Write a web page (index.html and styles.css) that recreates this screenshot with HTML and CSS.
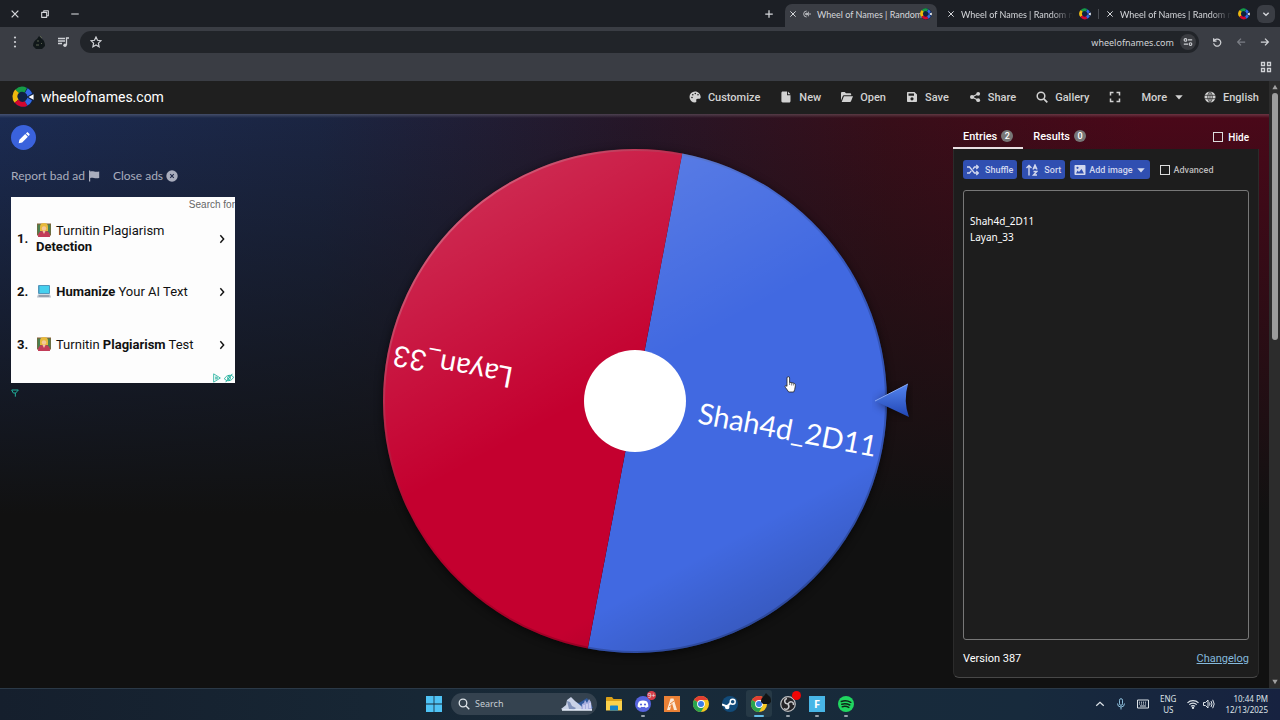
FILE: index.html
```
<!DOCTYPE html>
<html lang="en">

<head>
    <meta charset="UTF-8">
    <meta name="viewport" content="width=device-width, initial-scale=1.0">
    <title>Wheel of Names | Random name picker</title>
    <link rel="stylesheet" href="styles.css">
</head>

<body>
    <!-- shared icons -->
    <svg class="sprite" width="0" height="0" aria-hidden="true">
        <symbol id="logo" viewBox="0 0 24 24">
            <circle cx="12" cy="12" r="11.5" fill="#0f2242" />
            <g fill="none" stroke-width="5.500">
                <path d="M5.500 5.800A8.200 8.200 0 0 1 15 4.600" stroke="#169b45" />
                <path d="M5 16.500A8.200 8.200 0 0 1 5.500 5.800" stroke="#efb90c" />
                <path d="M15.500 19A8.200 8.200 0 0 1 5 16.500" stroke="#d2062f" />
                <path d="M15.700 4.900A8.200 8.200 0 0 1 15.500 19" stroke="#3469e6" />
            </g>
            <path d="M15.500 12L24 7v10z" fill="#0f2242" />
            <path d="M18 12l5.500-3v6z" fill="#fff" />
        </symbol>
        <symbol id="close" viewBox="0 0 12 12">
            <path d="M2 2l8 8M10 2l-8 8" fill="none" stroke="currentColor" stroke-width="1.500" />
        </symbol>
        <symbol id="caret" viewBox="0 0 12 12">
            <path d="M1.500 4h9L6 9z" fill="currentColor" />
        </symbol>
        <symbol id="chevron" viewBox="0 0 12 12">
            <path d="M4 1.500L8 6l-4 4.500" fill="none" stroke="currentColor" stroke-width="1.700" />
        </symbol>
        <symbol id="teacher" viewBox="0 0 14 14">
            <rect x="0" y="1" width="14" height="11" fill="#4c8050" stroke="#8a5f35" />
            <path d="M3 8V4a4 4 0 0 1 8 0v4z" fill="#e7b93c" />
            <circle cx="7" cy="5.500" r="2.200" fill="#f4c79a" />
            <path d="M1 14c0-5 2-6 6-6s6 1 6 6z" fill="#c23c58" />
            <path d="M5.500 8h3L7 11z" fill="#f2c6a8" />
        </symbol>
        <symbol id="chrome" viewBox="0 0 16 16">
            <circle cx="8" cy="8" r="8" fill="#f7c821" />
            <path d="M8 8L1.070 4A8 8 0 0 1 14.930 4H8z" fill="#e23e32" />
            <path d="M1.070 4A8 8 0 0 0 8 16l3.500-6L8 8z" fill="#2aa34f" />
            <circle cx="8" cy="8" r="3.900" fill="#fff" />
            <circle cx="8" cy="8" r="3" fill="#3c7de8" />
        </symbol>
    </svg>

    <div class="window">
        <!-- tab strip -->
        <div class="tab-strip">
            <div class="window-controls">
                <button aria-label="Close window"><svg class="i10"><use href="#close" /></svg></button>
                <button aria-label="Restore"><svg class="i10" viewBox="0 0 12 12"><path d="M2 4h6v6H2zM4.500 4V2H10v6H8" fill="none" stroke="currentColor" stroke-linejoin="round" stroke-width="1.300" /></svg></button>
                <button aria-label="Minimize"><svg class="i10" viewBox="0 0 12 12"><path d="M1.500 6h9" stroke="currentColor" stroke-width="1.300" /></svg></button>
            </div>
            <div class="tabs">
                <button class="new-tab" aria-label="New tab"><svg class="i10" viewBox="0 0 12 12"><path d="M6 1.500v9M1.500 6h9" stroke="currentColor" stroke-width="1.500" /></svg></button>
                <div class="tab active">
                    <svg class="i8"><use href="#close" /></svg>
                    <svg class="i8" viewBox="0 0 12 12"><circle cx="6" cy="6" r="1.500" fill="currentColor" /><path d="M5.500 1.500a4.500 4.500 0 0 0 0 9M5 4a2.300 2.300 0 0 0 0 4M8 2.500v7M10.500 4.500v3" fill="none" stroke="currentColor" stroke-width="1.200" /></svg>
                    <span class="tab-title">Wheel of Names | Random</span>
                    <svg class="i12"><use href="#logo" /></svg>
                </div>
                <div class="tab">
                    <svg class="i8"><use href="#close" /></svg>
                    <span class="tab-title">Wheel of Names | Random nam</span>
                    <svg class="i12"><use href="#logo" /></svg>
                </div>
                <div class="tab divided">
                    <svg class="i8"><use href="#close" /></svg>
                    <span class="tab-title">Wheel of Names | Random nam</span>
                    <svg class="i12"><use href="#logo" /></svg>
                </div>
                <button class="tab-search" aria-label="Search tabs"><svg class="i8" viewBox="0 0 12 12"><path d="M2 4l4 4 4-4" fill="none" stroke="currentColor" stroke-width="2" /></svg></button>
            </div>
        </div>

        <!-- address bar -->
        <div class="toolbar">
            <div class="tools">
                <button aria-label="Menu"><svg class="i12" viewBox="0 0 12 12" fill="currentColor"><circle cx="6" cy="1.500" r="1.100" /><circle cx="6" cy="6" r="1.100" /><circle cx="6" cy="10.500" r="1.100" /></svg></button>
                <button aria-label="Profile"><svg class="i14" viewBox="0 0 14 14"><path d="M1 11c0-4 2-6 4-7l2-3 3 3c2 1 3 4 3 7l-3 3H4z" fill="#11181a" /><path d="M8 1l2 2M5 6h2M9 8l1 1M4 10h3" stroke="#59614f" /></svg></button>
                <button aria-label="Media"><svg class="i12" viewBox="0 0 12 12"><path d="M1 2.500h7M1 5h7M1 7.500h4M9.500 9V2H12" fill="none" stroke="currentColor" stroke-width="1.300" /><circle cx="8" cy="9.300" r="1.700" fill="currentColor" /></svg></button>
            </div>
            <div class="address">
                <svg class="i12" viewBox="0 0 12 12"><path d="M6 1l1.500 3.300 3.500.4-2.600 2.400.7 3.600L6 8.900l-3.100 1.800.7-3.600L1 4.700l3.500-.4z" fill="none" stroke="currentColor" stroke-width="1.200" /></svg>
                <input class="url" type="text" aria-label="Address" value="wheelofnames.com">
                <span class="site-info"><svg class="i10" viewBox="0 0 12 12"><path d="M6 3.500h5M1 8.500h5" stroke="currentColor" stroke-width="1.500" /><g fill="none" stroke="currentColor" stroke-width="1.300"><circle cx="3" cy="3.500" r="1.600" /><circle cx="9" cy="8.500" r="1.600" /></g></svg></span>
            </div>
            <div class="tools wide">
                <button aria-label="Reload"><svg class="i10" viewBox="0 0 12 12"><path d="M2 1.500V5h3.500M2.300 5A4.300 4.300 0 1 1 2 7.500" fill="none" stroke="currentColor" stroke-width="1.500" /></svg></button>
                <button class="dim" aria-label="Forward"><svg class="i10" viewBox="0 0 12 12"><path d="M11 6H2M6 2L2 6l4 4" fill="none" stroke="currentColor" stroke-width="1.500" /></svg></button>
                <button aria-label="Back"><svg class="i10" viewBox="0 0 12 12"><path d="M1 6h9M6 2l4 4-4 4" fill="none" stroke="currentColor" stroke-width="1.500" /></svg></button>
            </div>
        </div>
        <div class="bookmarks">
            <button aria-label="Apps"><svg class="i12" viewBox="0 0 12 12"><path d="M1.500 1.500h3v3h-3zM7.500 1.500h3v3h-3zM1.500 7.500h3v3h-3zM7.500 7.500h3v3h-3z" fill="none" stroke="currentColor" stroke-width="1.300" /></svg></button>
        </div>

        <div class="viewport">
            <div class="page">
                <header class="site-header">
                    <a class="brand" href="#"><svg class="i22"><use href="#logo" /></svg>wheelofnames.com</a>
                    <nav class="menu">
                        <button><svg class="i12" viewBox="0 0 12 12"><path fill="currentColor" fill-rule="evenodd" d="M6 .5a5.500 5.500 0 0 0 0 11c1 0 1.600-.8 1.300-1.700-.4-1.200.3-2 1.400-2h1.500c.8 0 1.500-.6 1.500-1.500C11.600 3 9.200.5 6 .5zM3 7.300a.8.8 0 1 1 0-1.600.8.8 0 0 1 0 1.600zM3.800 4.500a.8.8 0 1 1 0-1.600.8.8 0 0 1 0 1.600zM6.300 3.300a.8.8 0 1 1 0-1.600.8.8 0 0 1 0 1.600zM9 4.500a.8.8 0 1 1 0-1.600.8.8 0 0 1 0 1.600z" /></svg>Customize</button>
                        <button><svg class="i12" viewBox="0 0 12 12"><path fill="currentColor" d="M2.700.5H7v3.700h3.500V10c0 .8-.5 1.500-1.300 1.500H2.700c-.8 0-1.300-.6-1.300-1.400V2C1.400 1.100 1.900.5 2.700.5zM7.900.5l2.600 2.800H7.900z" /></svg>New</button>
                        <button><svg class="i12" viewBox="0 0 12 12"><path fill="currentColor" d="M0 9.500V2.200C0 1.500.5 1 1.200 1h2.500L5 2.300h4c.7 0 1.200.5 1.200 1.200v.8H3C2.300 4.300 2 4.700 1.700 5.200zM2.900 5.200H12l-2 5c-.2.500-.5.800-1 .8H.7z" /></svg>Open</button>
                        <button><svg class="i12" viewBox="0 0 12 12"><path fill="currentColor" fill-rule="evenodd" d="M2 1h6.500L11 3.500V10c0 .6-.4 1-1 1H2c-.6 0-1-.4-1-1V2c0-.6.4-1 1-1zM2.500 2.500v2.200h5.500V2.500zM6 6.200a1.600 1.600 0 1 0 0 3.200 1.600 1.600 0 0 0 0-3.200z" /></svg>Save</button>
                        <button><svg class="i12" viewBox="0 0 12 12" fill="currentColor"><circle cx="9.200" cy="2.800" r="1.900" /><circle cx="9.200" cy="9.200" r="1.900" /><circle cx="3" cy="6" r="2" /><path d="M9.200 2.800L3 6l6.200 3.200" fill="none" stroke="currentColor" stroke-width="1.200" /></svg>Share</button>
                        <button><svg class="i12" viewBox="0 0 12 12"><circle cx="5" cy="5" r="3.800" fill="none" stroke="currentColor" stroke-width="1.500" /><path d="M7.800 7.800l3.500 3.500" stroke="currentColor" stroke-width="1.700" /></svg>Gallery</button>
                        <button aria-label="Fullscreen"><svg class="i12" viewBox="0 0 12 12"><path d="M1.500 4.500v-3h3M7.500 1.500h3v3M10.500 7.500v3h-3M4.500 10.500h-3v-3" fill="none" stroke="currentColor" stroke-width="1.500" /></svg></button>
                        <button>More<svg class="i10"><use href="#caret" /></svg></button>
                        <button><svg class="i12" viewBox="0 0 12 12"><circle cx="6" cy="6" r="5.500" fill="currentColor" /><path d="M.5 4.300h11M.5 7.700h11M6 .5v11M6 .5C3 3 3 9 6 11.500M6 .5C9 3 9 9 6 11.500" fill="none" stroke="#1f1f1f" stroke-width=".7" /></svg>English</button>
                    </nav>
                </header>

                <main class="content">
                    <aside class="side">
                        <button class="edit" aria-label="Edit title"><svg class="i12" viewBox="0 0 12 12" fill="currentColor"><path d="M.7 11.300l.7-3.500 5.800-5.700 2.700 2.700-5.700 5.800zM7.900 1.400l.8-.7c.5-.5 1-.5 1.500 0l1.100 1.100c.5.5.5 1 0 1.500l-.7.800z" /></svg></button>
                        <div class="ad-links">
                            <a href="#">Report bad ad <svg class="i12" viewBox="0 0 12 12" fill="currentColor"><path d="M1 .5h1.200v11H1zM2.200 1.500c3-1 4 .8 9 0V8c-5 1-6-1-9 0z" /></svg></a>
                            <a href="#">Close ads <svg class="i12" viewBox="0 0 12 12"><circle cx="6" cy="6" r="5.700" fill="currentColor" /><path d="M4.200 4.200l3.600 3.600M7.800 4.200L4.200 7.800" stroke="#202a49" stroke-width="1.100" /></svg></a>
                        </div>
                        <section class="ad">
                            <div class="ad-head">Search for</div>
                            <ol>
                                <li><b>1.</b><a href="#"><svg class="i14"><use href="#teacher" /></svg> Turnitin Plagiarism <b>Detection</b></a><svg class="i10"><use href="#chevron" /></svg></li>
                                <li><b>2.</b><a href="#"><svg class="i14" viewBox="0 0 14 14"><rect x="1" y="1" width="12" height="9" rx="1" fill="#5296bb" /><path d="M2.500 2h9.500v7H2.500z" fill="#45d0ee" /><path d="M1 10.500h12l1 3H0z" fill="#b0bac6" /><path d="M2 12h10" stroke="#7c8695" /></svg> <b>Humanize</b> Your AI Text</a><svg class="i10"><use href="#chevron" /></svg></li>
                                <li><b>3.</b><a href="#"><svg class="i14"><use href="#teacher" /></svg> Turnitin <b>Plagiarism</b> Test</a><svg class="i10"><use href="#chevron" /></svg></li>
                            </ol>
                            <div class="ad-choices">
                                <svg class="i10" viewBox="0 0 12 12"><path d="M2 1v10l8-5z M4.500 4.500v3L7 6z" fill="none" stroke="currentColor" /></svg>
                                <svg class="i10" viewBox="0 0 12 12"><path d="M.5 7C3 2 9 1.500 11.500 5 9 10 3 10.500.5 7zM2 11l8-10" fill="none" stroke="currentColor" stroke-width="1.200" /><circle cx="6" cy="6" r="1.800" fill="none" stroke="currentColor" /></svg>
                            </div>
                        </section>
                        <svg class="i8 ad-mark" viewBox="0 0 12 12"><path d="M1 1.500h10L7 6H3.500zM6.500 6v5.500" fill="none" stroke="currentColor" stroke-width="1.500" /></svg>
                    </aside>

                    <section class="stage">
                        <svg class="wheel" viewBox="0 -1 560 540" role="img" aria-label="Wheel">
                            <defs>
                                <linearGradient id="shine" x1=".3" y1="0" x2=".82" y2=".95">
                                    <stop offset="0" stop-color="#fff" stop-opacity=".17" />
                                    <stop offset=".45" stop-color="#fff" stop-opacity="0" />
                                    <stop offset=".8" stop-color="#000" stop-opacity="0" />
                                    <stop offset="1" stop-color="#000" stop-opacity=".18" />
                                </linearGradient>
                                <linearGradient id="rim" x1=".1" y1=".1" x2=".7" y2=".7">
                                    <stop offset="0" stop-color="#fff" stop-opacity=".3" />
                                    <stop offset=".6" stop-color="#000" stop-opacity=".1" />
                                    <stop offset="1" stop-color="#000" stop-opacity=".2" />
                                </linearGradient>
                                <linearGradient id="pin" x1="0" y1="0" x2="0" y2="1">
                                    <stop offset="0" stop-color="#5485f0" />
                                    <stop offset="1" stop-color="#2146b4" />
                                </linearGradient>
                                <filter id="glow" x="-10%" y="-10%" width="120%" height="120%">
                                    <feGaussianBlur stdDeviation="5" />
                                </filter>
                            </defs>
                            <circle cx="280" cy="272" r="252" fill="#000" opacity=".6" filter="url(#glow)" />
                            <g transform="rotate(10.800 280 270)">
                                <path d="M280 18a252 252 0 0 1 0 504z" fill="#4169e1" />
                                <path d="M280 18a252 252 0 0 0 0 504z" fill="#c4002f" />
                            </g>
                            <circle cx="280" cy="270" r="252" fill="url(#shine)" />
                            <circle cx="280" cy="270" r="251" fill="none" stroke="url(#rim)" stroke-width="2" />
                            <text class="slice" transform="rotate(10.800 280 270)" x="526" y="280" text-anchor="end">Shah4d_2D11</text>
                            <text class="slice" transform="rotate(190.800 280 270)" x="526" y="280" text-anchor="end">Layan_33</text>
                            <circle cx="280" cy="270" r="51" fill="#fff" />
                            <path d="M521 271l33-17q-5 17 0 33z" fill="#000" opacity=".5" filter="url(#glow)" />
                            <path d="M520 270l33-17q-5 17 1 33z" fill="url(#pin)" />
                            <path d="M520 270l33-17" stroke="#8aabf7" />
                            <!-- hand pointer -->
                            <g transform="translate(1 3)">
                                <path d="M431 249.500v-5.500a1.300 1.300 0 0 1 2.600 0v4.200l4.200 1c1.300.3 1.800 1.200 1.600 2.400l-.7 4-1 2.400h-5l-3.200-4.500c-1.200-2 .2-2.500 1.500-1.200z" fill="#fff" stroke="#222" stroke-width=".8" />
                                <path d="M433.600 248v3M435.700 249v2.500M437.700 249.500v2" stroke="#222" stroke-width=".6" />
                            </g>
                        </svg>
                    </section>

                    <aside class="panel">
                        <div class="panel-tabs">
                            <button class="selected">Entries <span class="count">2</span></button>
                            <button>Results <span class="count">0</span></button>
                            <label class="hide"><input type="checkbox"> Hide</label>
                        </div>
                        <div class="card">
                            <div class="actions">
                                <button><svg class="i12" viewBox="0 0 12 12"><path d="M0 3h2.500l5 6H11M0 9h2.500l1.800-2.200M6 5l1.500-2H11M9.300 1L11.300 3l-2 2M9.300 7l2 2-2 2" fill="none" stroke="currentColor" stroke-width="1.300" /></svg>Shuffle</button>
                                <button><svg class="i12" viewBox="0 0 12 12"><path d="M3 11.500V1.500M.5 4L3 1.500 5.500 4M7.500 7.500h3.300L7.500 11h3.500M7 5.500L9 1l2 4.500M7.700 4h2.600" fill="none" stroke="currentColor" stroke-width="1.400" /></svg>Sort</button>
                                <button class="tight"><svg class="i12" viewBox="0 0 12 12"><path d="M1.500 1h9c.6 0 1 .4 1 1v8c0 .6-.4 1-1 1h-9c-.6 0-1-.4-1-1V2c0-.6.4-1 1-1zM2 9.500h8L7.500 5 5 8 3.500 6.500zM3.500 2.700a1.100 1.100 0 1 0 0 2.200 1.100 1.100 0 0 0 0-2.200z" fill="currentColor" fill-rule="evenodd" /></svg>Add image<svg class="i10"><use href="#caret" /></svg></button>
                                <label><input type="checkbox"> Advanced</label>
                            </div>
                            <textarea class="entries" aria-label="Entries" spellcheck="false">

Shah4d_2D11
Layan_33</textarea>
                            <div class="card-foot">
                                <span>Version 387</span>
                                <a href="#">Changelog</a>
                            </div>
                        </div>
                    </aside>
                </main>
            </div>
            <div class="scrollbar">
                <svg class="i8" viewBox="0 0 12 12"><path d="M2 9.500l4-7 4 7z" fill="currentColor" /></svg>
                <div class="thumb"></div>
                <svg class="i8" viewBox="0 0 12 12"><path d="M2 2.500l4 7 4-7z" fill="currentColor" /></svg>
            </div>
        </div>
    </div>

    <footer class="taskbar">
        <div class="apps">
            <button aria-label="Start"><svg class="i16" viewBox="0 0 16 16"><path d="M0 0h7.600v7.600H0zM8.400 0H16v7.600H8.400zM0 8.400h7.600V16H0zM8.400 8.400H16V16H8.400z" fill="#4fc3f5" /></svg></button>
            <label class="search">
                <svg class="i12" viewBox="0 0 12 12"><circle cx="5" cy="5" r="3.800" fill="none" stroke="currentColor" stroke-width="1.300" /><path d="M7.800 7.800l3.500 3.500" stroke="currentColor" stroke-width="1.300" /></svg>
                <input type="text" placeholder="Search" aria-label="Search">
                <svg class="scene" viewBox="0 0 32 16"><path d="M8 5l10 2 8-5 6 10-8 2z" fill="#315a9c" /><path d="M0 13l5-4 1-5 4-3 4 4 5 4 5 5H2z" fill="#c9d2e6" /><path d="M6 5l3 1 2 4 4 2-2 2-5-1z" fill="#7f91b8" /><path d="M20 14l1-6 2-1 1-3 2 3 2-4 2 3 1 8z" fill="#a9b0df" /><path d="M23 9v4M26 8v5M29 7v5" stroke="#eef" /><path d="M1 14h30" stroke="#e6eef8" stroke-width="1.500" /></svg>
            </label>
            <button aria-label="File Explorer"><svg class="i16" viewBox="0 0 16 16"><path d="M0 2c0-.6.4-1 1-1h5l1.500 2H15c.6 0 1 .4 1 1v10H0z" fill="#dba119" /><path d="M0 5h16v9.500H0z" fill="#fbd14b" /><path d="M4 10.500c0-.6.400-1 1-1h6c.6 0 1 .4 1 1v4H4z" fill="#1684c9" /></svg></button>
            <button class="running" aria-label="Discord"><svg class="i16" viewBox="0 0 16 16"><circle cx="8" cy="8" r="8" fill="#5663dd" /><path d="M4 5.500c2.500-1.400 5.500-1.400 8 0 1 1.700 1.500 3.500 1.300 5.200l-2.600 1.300-.7-1.200c-1.300.3-2.700.3-4 0L5.300 12l-2.600-1.300C2.500 9 3 7.200 4 5.500z" fill="#fff" /><circle cx="6" cy="8.500" r="1.100" fill="#5663dd" /><circle cx="10" cy="8.500" r="1.100" fill="#5663dd" /></svg><span class="badge">9+</span></button>
            <button aria-label="FiveM"><svg class="i16" viewBox="0 0 16 16"><path d="M0 0h16v16H0z" fill="#ea8136" /><path d="M3 14L6.500 2.500h3L13 14h-3L8 7l-2 7z" fill="#fbe9d6" /><path d="M6 8l4-3M5 11l3-2" stroke="#ea8136" /></svg></button>
            <button aria-label="Chrome"><svg class="i16"><use href="#chrome" /></svg></button>
            <button aria-label="Steam"><svg class="i16" viewBox="0 0 16 16"><circle cx="8" cy="8" r="8" fill="#124b7a" /><path d="M0 8.500l5 2 5-5" fill="none" stroke="#fff" stroke-width="2" /><circle cx="5.200" cy="11" r="2.300" fill="#fff" /><circle cx="10.700" cy="5.700" r="2.500" fill="#124b7a" stroke="#fff" stroke-width="1.400" /></svg></button>
            <button class="running current" aria-label="Chrome window"><svg class="i16"><use href="#chrome" /></svg><svg class="avatar" viewBox="0 0 12 12"><path d="M1 10c0-4 2-5 3-6l2-3 3 3c2 1 2 4 2 6l-2 2H3z" fill="#101415" /></svg></button>
            <button class="running" aria-label="OBS"><svg class="i16" viewBox="0 0 16 16"><circle cx="8" cy="8" r="7.300" fill="#242326" stroke="#bdbec0" stroke-width="1.200" /><path d="M8 8C3.500 7.500 4 3 7 2.500M8 8c2-4 6-2 5.500 1M8 8c2.500 3.800-1 6.500-4 4.500" fill="none" stroke="#c8c9cb" stroke-width="1.500" /></svg><span class="badge record"></span></button>
            <button class="running" aria-label="Fortnite"><svg class="i16" viewBox="0 0 16 16"><path d="M0 0h16v16H0z" fill="#48b6e7" /><text class="tile-letter" x="8" y="12" text-anchor="middle">F</text></svg></button>
            <button class="running" aria-label="Spotify"><svg class="i16" viewBox="0 0 16 16"><circle cx="8" cy="8" r="8" fill="#20d660" /><path d="M3.300 5.500c3-1 6.500-.8 9.500.8M3.800 8.200c2.700-.8 5.500-.5 8 .8M4.300 10.700c2.200-.6 4.500-.4 6.500.7" fill="none" stroke="#0f2418" stroke-width="1.500" stroke-linecap="round" /></svg></button>
        </div>
        <div class="tray">
            <svg class="i10" viewBox="0 0 12 12"><path d="M1.500 8L6 4l4.500 4" fill="none" stroke="currentColor" stroke-width="1.500" /></svg>
            <svg class="i12" viewBox="0 0 12 12" fill="none" stroke="#8dbfdc"><rect x="4.500" y=".7" width="3" height="6.600" rx="1.500" /><path d="M2.500 5.500a3.500 3.500 0 0 0 7 0M6 9v2.500" /></svg>
            <svg class="i12" viewBox="0 0 12 12" fill="none" stroke="currentColor"><path d="M.5 2h11v8H.5z" /><path d="M2 4.200h8M2 6h8" stroke-dasharray="1 1" /><path d="M3 8h6" /></svg>
            <div class="lang">ENG<br>US</div>
            <div class="net">
                <svg class="i12" viewBox="0 0 12 12" fill="none" stroke="currentColor" stroke-width="1.200"><path d="M.5 4.800c3-3 8-3 11 0M2.300 6.700c2-2 5.400-2 7.400 0M4 8.400c1-1 3-1 4 0" /><circle cx="6" cy="9.800" r=".6" /></svg>
                <svg class="i12" viewBox="0 0 12 12" fill="none" stroke="currentColor"><path d="M.5 4.500h2L5 2v8L2.500 7.500h-2zM6.500 4.500q1 1.500 0 3M8 3q2 3 0 6M9.700 1.800q3 4.200 0 8.400" /></svg>
            </div>
            <div class="clock">10:44 PM<br>12/13/2025</div>
        </div>
    </footer>
</body>

</html>
```
FILE: styles.css
```
* {
    box-sizing: border-box;
}

body {
    margin: 0;
    height: 100vh;
    display: flex;
    flex-direction: column;
    background: #111;
    color: #fff;
    font-family: Roboto, sans-serif;
    font-size: 11px;
    overflow: hidden;
}

button,
input,
textarea {
    font: inherit;
    color: inherit;
    background: none;
    border: 0;
    padding: 0;
    margin: 0;
}

button {
    display: flex;
    align-items: center;
    justify-content: center;
}

a {
    color: inherit;
    text-decoration: none;
}

svg {
    flex: none;
}

.sprite {
    position: absolute;
}

/* icon sizes */
.i8 { width: 8px; height: 8px; }
.i10 { width: 10px; height: 10px; }
.i12 { width: 12px; height: 12px; }
.i14 { width: 14px; height: 14px; }
.i16 { width: 16px; height: 16px; }
.i22 { width: 22px; height: 22px; }

.window {
    flex: 1;
    min-height: 0;
    display: flex;
    flex-direction: column;
    background: #3a3d44;
}

/* tab strip */
.tab-strip {
    height: 27px;
    display: flex;
    justify-content: space-between;
    background: #1c1f25;
    color: #d5d7db;
    font-family: Lato, sans-serif;
    font-size: 9px;
}

.window-controls {
    display: flex;
    gap: 20px;
    padding-left: 10px;
}

.tabs {
    display: flex;
    align-items: flex-end;
    padding-right: 5px;
}

.new-tab {
    height: 27px;
    margin-right: 11px;
}

.tab {
    width: 159px;
    height: 23px;
    display: flex;
    align-items: center;
    gap: 6px;
    padding: 0 7px 3px 8px;
}

.tab.active {
    width: 152px;
    padding: 0 5px 3px 4px;
    background: #3a3d44;
    border-radius: 7px 7px 0 0;
    margin-right: 2px;
}

.tab.divided {
    position: relative;
}

.tab.divided::before {
    content: "";
    position: absolute;
    left: 0;
    top: 5px;
    width: 1px;
    height: 10px;
    background: #4a4d54;
}

.tab-title {
    flex: 1;
    min-width: 0;
    white-space: nowrap;
    -webkit-mask-image: linear-gradient(to right, #000 80%, transparent);
    mask-image: linear-gradient(to right, #000 80%, transparent);
}

.active .tab-title {
    -webkit-mask-image: none;
    mask-image: none;
}

.tab-search {
    align-self: center;
    width: 18px;
    height: 18px;
    border-radius: 6px;
    background: #3a3d44;
}

/* address bar */
.toolbar {
    height: 30px;
    display: flex;
    align-items: center;
    gap: 11px;
    padding: 0 10px 0 9px;
    color: #d0d2d6;
}

.tools {
    display: flex;
    gap: 11px;
}

.tools.wide {
    gap: 14px;
    padding-left: 2px;
}

.dim {
    color: #7b7e85;
}

.address {
    flex: 1;
    height: 22px;
    display: flex;
    align-items: center;
    gap: 6px;
    padding: 0 3px 0 10px;
    border-radius: 11px;
    background: #212429;
    font-family: "Noto Sans", sans-serif;
    font-size: 9px;
}

.url {
    flex: 1;
    min-width: 0;
    text-align: right;
}

.site-info {
    width: 16px;
    height: 16px;
    display: flex;
    align-items: center;
    justify-content: center;
    border-radius: 50%;
    background: #3a3c41;
}

.bookmarks {
    height: 24px;
    display: flex;
    justify-content: flex-end;
    padding: 0 8px 4px 0;
    color: #d0d2d6;
}

/* page */
.viewport {
    flex: 1;
    min-height: 0;
    display: flex;
}

.page {
    flex: 1;
    min-width: 0;
    display: flex;
    flex-direction: column;
    background: #111;
}

.site-header {
    height: 33px;
    display: flex;
    align-items: center;
    justify-content: space-between;
    padding: 0 10px 1px 12px;
    background: #1f1f1f;
}

.brand {
    display: flex;
    align-items: center;
    gap: 7px;
    font-size: 14px;
}

.menu {
    display: flex;
    gap: 20px;
    color: #d2d2d2;
    font-weight: 500;
}

.menu button {
    gap: 7px;
}

.content {
    flex: 1;
    min-height: 0;
    display: grid;
    grid-template-columns: 306px minmax(0, 1fr) 306px;
    padding: 8px 10px 10px;
    background:
        linear-gradient(to bottom, rgba(255, 255, 255, 0.18), transparent 4px),
        linear-gradient(to bottom, rgba(17, 17, 17, 0), #111 400px),
        linear-gradient(to right, #1b2b52, #1b2542 25%, #261628 50%, #380e19 70%, #4a0819 90%);
}

.side {
    padding-left: 1px;
}

.edit {
    width: 25px;
    height: 25px;
    margin: 3px 0 19px;
    border-radius: 50%;
    background: #3a62dc;
}

.ad-links {
    display: flex;
    gap: 13px;
    height: 13px;
    align-items: center;
    margin-bottom: 15px;
    color: #a9adbd;
    font-family: Lato, sans-serif;
    font-size: 12px;
}

.ad-links a {
    display: flex;
    align-items: center;
    gap: 3px;
}

.ad {
    width: 224px;
    background: #fdfdfd;
    color: #111;
    font-size: 13px;
    line-height: 16px;
}

.ad-head {
    height: 15px;
    overflow: hidden;
    color: #666;
    font: 10px/16px "Liberation Sans", sans-serif;
    text-align: right;
}

.ad ol {
    list-style: none;
    margin: 0;
    padding: 0 8px 0 6px;
}

.ad li {
    height: 53px;
    display: grid;
    grid-template-columns: 19px 1fr 10px;
    align-items: center;
}

.ad li a svg {
    vertical-align: -2px;
    margin: 0 2px 0 1px;
}

.ad b {
    font-weight: 700;
}

.ad-choices {
    display: flex;
    justify-content: flex-end;
    align-items: flex-end;
    gap: 2px;
    height: 12px;
    padding-right: 1px;
    color: #20b09c;
}

.ad-mark {
    margin-top: 6px;
    color: #20b09c;
    display: block;
}

/* wheel */
.stage {
    display: flex;
    align-items: center;
    justify-content: center;
    min-height: 0;
}

.wheel {
    width: 560px;
    height: 540px;
    max-width: 100%;
    max-height: 100%;
}

.slice {
    fill: #fff;
    font-family: Lato, sans-serif;
    font-size: 29px;
}

/* entries panel */
.panel {
    display: flex;
    flex-direction: column;
    min-height: 0;
}

.panel-tabs {
    height: 27px;
    display: flex;
    font-weight: 500;
}

.panel-tabs button {
    gap: 4px;
    padding: 3px 10px 0;
    border-bottom: 2px solid transparent;
}

.panel-tabs .selected {
    border-color: #e9dfe2;
}

.count {
    width: 12px;
    height: 12px;
    border-radius: 50%;
    background: #777;
    font-size: 9px;
    line-height: 12px;
}

label {
    display: flex;
    align-items: center;
}

.hide {
    gap: 5px;
    margin-left: auto;
    padding: 3px 10px 0 0;
    font-size: 10px;
}

.panel input {
    appearance: none;
    width: 10px;
    height: 10px;
    border: 1px solid #ddd;
}

.card {
    flex: 1;
    min-height: 0;
    display: flex;
    flex-direction: column;
    padding: 11px 9px 0;
    background: #1d1d1d;
    border: 1px solid #2b2b2b;
    border-top: 0;
    border-bottom-color: #484848;
    border-radius: 0 0 6px 6px;
}

.actions {
    display: flex;
    gap: 5px;
    height: 19px;
    margin-bottom: 11px;
    font-size: 9px;
    font-weight: 500;
    color: #d2d8ee;
}

.actions button {
    gap: 6px;
    padding: 0 4px;
    border-radius: 3px;
    background: #304fb1;
}

.actions .tight {
    gap: 3px;
}

.actions label {
    gap: 4px;
    padding-left: 5px;
    color: #bbb;
}

.entries {
    flex: 1;
    min-height: 0;
    padding: 6px;
    border: 1px solid #777;
    border-radius: 3px;
    resize: none;
    font: 10px/16px "Noto Sans", sans-serif;
}

.card-foot {
    height: 37px;
    display: flex;
    align-items: center;
    justify-content: space-between;
}

.card-foot a {
    color: #85b9dc;
    text-decoration: underline;
}

.scrollbar {
    width: 11px;
    display: flex;
    flex-direction: column;
    align-items: center;
    padding: 2px 0;
    background: #2c2c2c;
    color: #a0a0a0;
}

.thumb {
    width: 6px;
    height: 41%;
    margin: 2px 0 auto;
    border-radius: 3px;
    background: #9c9c9c;
}

/* taskbar */
.taskbar {
    height: 32px;
    display: grid;
    grid-template-columns: 1fr auto 1fr;
    padding-bottom: 2px;
    background: linear-gradient(to right, #151f2d, #182a38 45%, #172a3c 80%, #172240);
    border-top: 1px solid #2b3947;
    color: #dde3e8;
    font-family: "Noto Sans", sans-serif;
}

.apps {
    grid-column: 2;
    display: flex;
    align-items: center;
    gap: 3px;
}

.apps button {
    position: relative;
    width: 26px;
    height: 27px;
}

.search {
    width: 146px;
    height: 22px;
    gap: 5px;
    padding: 0 4px 0 7px;
    margin: 0 1px;
    border-radius: 11px;
    background: #34424f;
    font-size: 9px;
}

.search input {
    flex: 1;
    min-width: 0;
}

.search input::placeholder {
    color: #c6cdd3;
}

.scene {
    width: 32px;
    height: 16px;
}

.badge {
    position: absolute;
    top: 1px;
    right: 0;
    min-width: 9px;
    height: 9px;
    border-radius: 5px;
    background: #d63c48;
    font-size: 7px;
    line-height: 9px;
}

.record {
    background: #f00606;
}

.avatar {
    position: absolute;
    top: 2px;
    right: 0;
    width: 12px;
    height: 12px;
}

.running::after {
    content: "";
    position: absolute;
    bottom: 0;
    width: 4px;
    height: 2px;
    border-radius: 1px;
    background: #98a2ac;
}

.current {
    border-radius: 3px;
    background: #263946;
}

.current::after {
    width: 10px;
    background: #64bde8;
}

.tile-letter {
    fill: #fff;
    font: 700 11px "Open Sans", sans-serif;
}

.tray {
    display: flex;
    align-items: center;
    justify-content: flex-end;
    gap: 10px;
    padding-right: 12px;
    font-size: 8px;
    line-height: 11px;
    text-align: center;
}

.lang {
    margin: 0 1px;
}

.net {
    display: flex;
    gap: 4px;
}

.clock {
    text-align: right;
}
```
